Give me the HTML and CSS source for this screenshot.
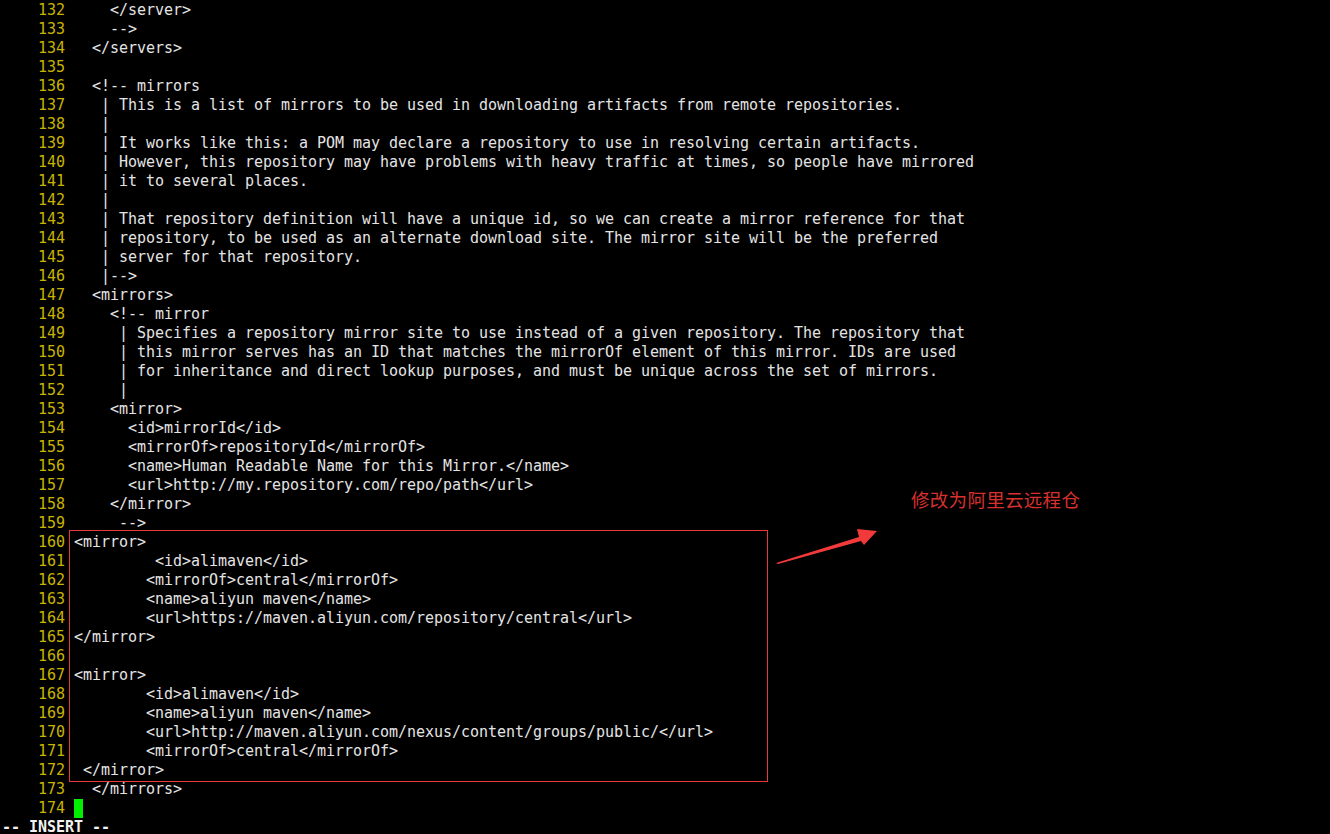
FILE: index.html
```html
<!DOCTYPE html>
<html lang="en">
<head>
    <meta charset="UTF-8">
    <title>vim settings.xml</title>
    <link rel="stylesheet" href="styles.css">
</head>
<body>
    <div class="term">
        <div class="buffer">
            <div class="line"><span class="num">132</span><span class="code">    &lt;/server&gt;</span></div>
            <div class="line"><span class="num">133</span><span class="code">    --&gt;</span></div>
            <div class="line"><span class="num">134</span><span class="code">  &lt;/servers&gt;</span></div>
            <div class="line"><span class="num">135</span><span class="code"></span></div>
            <div class="line"><span class="num">136</span><span class="code">  &lt;!-- mirrors</span></div>
            <div class="line"><span class="num">137</span><span class="code">   | This is a list of mirrors to be used in downloading artifacts from remote repositories.</span></div>
            <div class="line"><span class="num">138</span><span class="code">   |</span></div>
            <div class="line"><span class="num">139</span><span class="code">   | It works like this: a POM may declare a repository to use in resolving certain artifacts.</span></div>
            <div class="line"><span class="num">140</span><span class="code">   | However, this repository may have problems with heavy traffic at times, so people have mirrored</span></div>
            <div class="line"><span class="num">141</span><span class="code">   | it to several places.</span></div>
            <div class="line"><span class="num">142</span><span class="code">   |</span></div>
            <div class="line"><span class="num">143</span><span class="code">   | That repository definition will have a unique id, so we can create a mirror reference for that</span></div>
            <div class="line"><span class="num">144</span><span class="code">   | repository, to be used as an alternate download site. The mirror site will be the preferred</span></div>
            <div class="line"><span class="num">145</span><span class="code">   | server for that repository.</span></div>
            <div class="line"><span class="num">146</span><span class="code">   |--&gt;</span></div>
            <div class="line"><span class="num">147</span><span class="code">  &lt;mirrors&gt;</span></div>
            <div class="line"><span class="num">148</span><span class="code">    &lt;!-- mirror</span></div>
            <div class="line"><span class="num">149</span><span class="code">     | Specifies a repository mirror site to use instead of a given repository. The repository that</span></div>
            <div class="line"><span class="num">150</span><span class="code">     | this mirror serves has an ID that matches the mirrorOf element of this mirror. IDs are used</span></div>
            <div class="line"><span class="num">151</span><span class="code">     | for inheritance and direct lookup purposes, and must be unique across the set of mirrors.</span></div>
            <div class="line"><span class="num">152</span><span class="code">     |</span></div>
            <div class="line"><span class="num">153</span><span class="code">    &lt;mirror&gt;</span></div>
            <div class="line"><span class="num">154</span><span class="code">      &lt;id&gt;mirrorId&lt;/id&gt;</span></div>
            <div class="line"><span class="num">155</span><span class="code">      &lt;mirrorOf&gt;repositoryId&lt;/mirrorOf&gt;</span></div>
            <div class="line"><span class="num">156</span><span class="code">      &lt;name&gt;Human Readable Name for this Mirror.&lt;/name&gt;</span></div>
            <div class="line"><span class="num">157</span><span class="code">      &lt;url&gt;http://my.repository.com/repo/path&lt;/url&gt;</span></div>
            <div class="line"><span class="num">158</span><span class="code">    &lt;/mirror&gt;</span></div>
            <div class="line"><span class="num">159</span><span class="code">     --&gt;</span></div>
            <div class="line"><span class="num">160</span><span class="code">&lt;mirror&gt;</span></div>
            <div class="line"><span class="num">161</span><span class="code">         &lt;id&gt;alimaven&lt;/id&gt;</span></div>
            <div class="line"><span class="num">162</span><span class="code">        &lt;mirrorOf&gt;central&lt;/mirrorOf&gt;</span></div>
            <div class="line"><span class="num">163</span><span class="code">        &lt;name&gt;aliyun maven&lt;/name&gt;</span></div>
            <div class="line"><span class="num">164</span><span class="code">        &lt;url&gt;https://maven.aliyun.com/repository/central&lt;/url&gt;</span></div>
            <div class="line"><span class="num">165</span><span class="code">&lt;/mirror&gt;</span></div>
            <div class="line"><span class="num">166</span><span class="code"></span></div>
            <div class="line"><span class="num">167</span><span class="code">&lt;mirror&gt;</span></div>
            <div class="line"><span class="num">168</span><span class="code">        &lt;id&gt;alimaven&lt;/id&gt;</span></div>
            <div class="line"><span class="num">169</span><span class="code">        &lt;name&gt;aliyun maven&lt;/name&gt;</span></div>
            <div class="line"><span class="num">170</span><span class="code">        &lt;url&gt;http://maven.aliyun.com/nexus/content/groups/public/&lt;/url&gt;</span></div>
            <div class="line"><span class="num">171</span><span class="code">        &lt;mirrorOf&gt;central&lt;/mirrorOf&gt;</span></div>
            <div class="line"><span class="num">172</span><span class="code"> &lt;/mirror&gt;</span></div>
            <div class="line"><span class="num">173</span><span class="code">  &lt;/mirrors&gt;</span></div>
            <div class="line"><span class="num">174</span><span class="code"><span class="cursor"> </span></span></div>
        </div>
        <div class="status">-- INSERT --</div>

        <!-- screenshot annotation -->
        <div class="mark"></div>
        <svg class="arrow" width="120" height="50" viewBox="770 522 120 50" aria-hidden="true">
            <polygon points="776,563 859,537 857,529 877,531 864,545 861,541 778,564" fill="#f23a3a"/>
        </svg>
        <div class="note">修改为阿里云远程仓</div>
    </div>
</body>
</html>
```

FILE: styles.css
```css
* {
    margin: 0;
    padding: 0;
    box-sizing: border-box;
}

html,
body {
    background: #000;
    height: 100%;
    overflow: hidden;
}

.term {
    position: relative;
    height: 100%;
    padding-top: 1px;
    font-family: "DejaVu Sans Mono", "Liberation Mono", monospace;
    font-size: 15px;
    letter-spacing: -0.03px;
    line-height: 19px;
    color: #e4e4e4;
}

.buffer {
    display: flex;
    flex-direction: column;
}

.line {
    display: flex;
    height: 19px;
    white-space: pre;
}

.num {
    width: 74px;
    padding-right: 9px;
    text-align: right;
    color: #c8b400;
}

.cursor {
    display: inline-block;
    width: 9px;
    height: 19px;
    background: #00f000;
    vertical-align: top;
}

.status {
    padding-left: 2px;
    height: 19px;
    font-weight: bold;
    color: #f2f2f2;
    white-space: pre;
}

.mark {
    position: absolute;
    left: 69px;
    top: 530px;
    width: 699px;
    height: 252px;
    border: 1px solid #e8393a;
}

.arrow {
    position: absolute;
    left: 770px;
    top: 522px;
}

.note {
    position: absolute;
    left: 911px;
    top: 487px;
    font-family: "Noto Sans CJK SC", sans-serif;
    font-size: 18.5px;
    line-height: 24px;
    letter-spacing: 0.3px;
    color: #d8302f;
}
```
